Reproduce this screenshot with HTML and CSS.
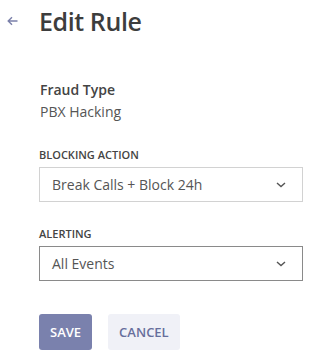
FILE: index.html
```html
<!DOCTYPE html>
<html>
<head>
<meta charset="utf-8">
<link rel="stylesheet" href="styles.css">
</head>
<body>
<div class="page">
  <header class="header">
    <span class="back">
      <svg width="11" height="10" viewBox="0 0 11 10"><path d="M10.5 5H1.2M5 1.2L1.2 5L5 8.8" fill="none" stroke="#7b80aa" stroke-width="1.4"/></svg>
    </span>
    <h1 class="title">Edit Rule</h1>
  </header>
  <div class="form">
    <div class="info">
      <div class="info-label">Fraud Type</div>
      <div class="info-value">PBX Hacking</div>
    </div>
    <div class="field">
      <div class="field-label">BLOCKING ACTION</div>
      <div class="select select-light">
        <span>Break Calls + Block 24h</span>
        <svg class="chev" width="10" height="6" viewBox="0 0 10 6"><path d="M1 1L5 4.6L9 1" fill="none" stroke="#555" stroke-width="1.4"/></svg>
      </div>
    </div>
    <div class="field">
      <div class="field-label">ALERTING</div>
      <div class="select select-dark">
        <span>All Events</span>
        <svg class="chev" width="10" height="6" viewBox="0 0 10 6"><path d="M1 1L5 4.6L9 1" fill="none" stroke="#555" stroke-width="1.4"/></svg>
      </div>
    </div>
    <div class="actions">
      <button class="btn btn-save">SAVE</button>
      <button class="btn btn-cancel">CANCEL</button>
    </div>
  </div>
</div>
</body>
</html>
```
FILE: styles.css
```css
html, body {
  margin: 0;
  padding: 0;
  background: #ffffff;
}
body {
  font-family: "Open Sans", "Noto Sans", sans-serif;
  color: #444;
}
.page {
  width: 322px;
  height: 361px;
  overflow: hidden;
}
.header {
  display: flex;
  align-items: center;
  padding-top: 5px;
}
.back {
  width: 32px;
  padding-left: 7px;
  display: flex;
  align-items: center;
  height: 32px;
}
.title {
  margin: 0;
  font-size: 25px;
  line-height: 32px;
  font-weight: 600;
  letter-spacing: -0.4px;
  color: #3d3d3d;
}
.form {
  padding-left: 39px;
  width: 264px;
}
.info {
  padding-top: 42px;
  padding-left: 1px;
}
.info-label {
  font-size: 14px;
  line-height: 22px;
  font-weight: 600;
  color: #444;
}
.info-value {
  font-size: 14px;
  line-height: 22px;
  color: #555;
}
.field {
  padding-top: 24px;
}
.field-label {
  font-size: 11px;
  line-height: 16px;
  font-weight: 600;
  color: #444;
  margin-bottom: 4px;
}
.select {
  height: 35px;
  box-sizing: border-box;
  display: flex;
  align-items: center;
  justify-content: space-between;
  padding: 0 16px 0 12px;
  font-size: 14px;
  color: #555;
}
.select-light {
  border: 1px solid #d2d2d2;
}
.select-dark {
  border: 1px solid #8a8a8a;
}
.chev {
  display: block;
}
.actions {
  display: flex;
  gap: 16px;
  padding-top: 33px;
}
.btn {
  font-family: "Open Sans", "Noto Sans", sans-serif;
  height: 36px;
  border: none;
  border-radius: 3px;
  padding: 0 11px;
  font-size: 13px;
  font-weight: 600;
  cursor: pointer;
}
.btn-save {
  background: #7a81ad;
  color: #ffffff;
}
.btn-cancel {
  background: #f0f1f7;
  color: #676e9c;
}
```
